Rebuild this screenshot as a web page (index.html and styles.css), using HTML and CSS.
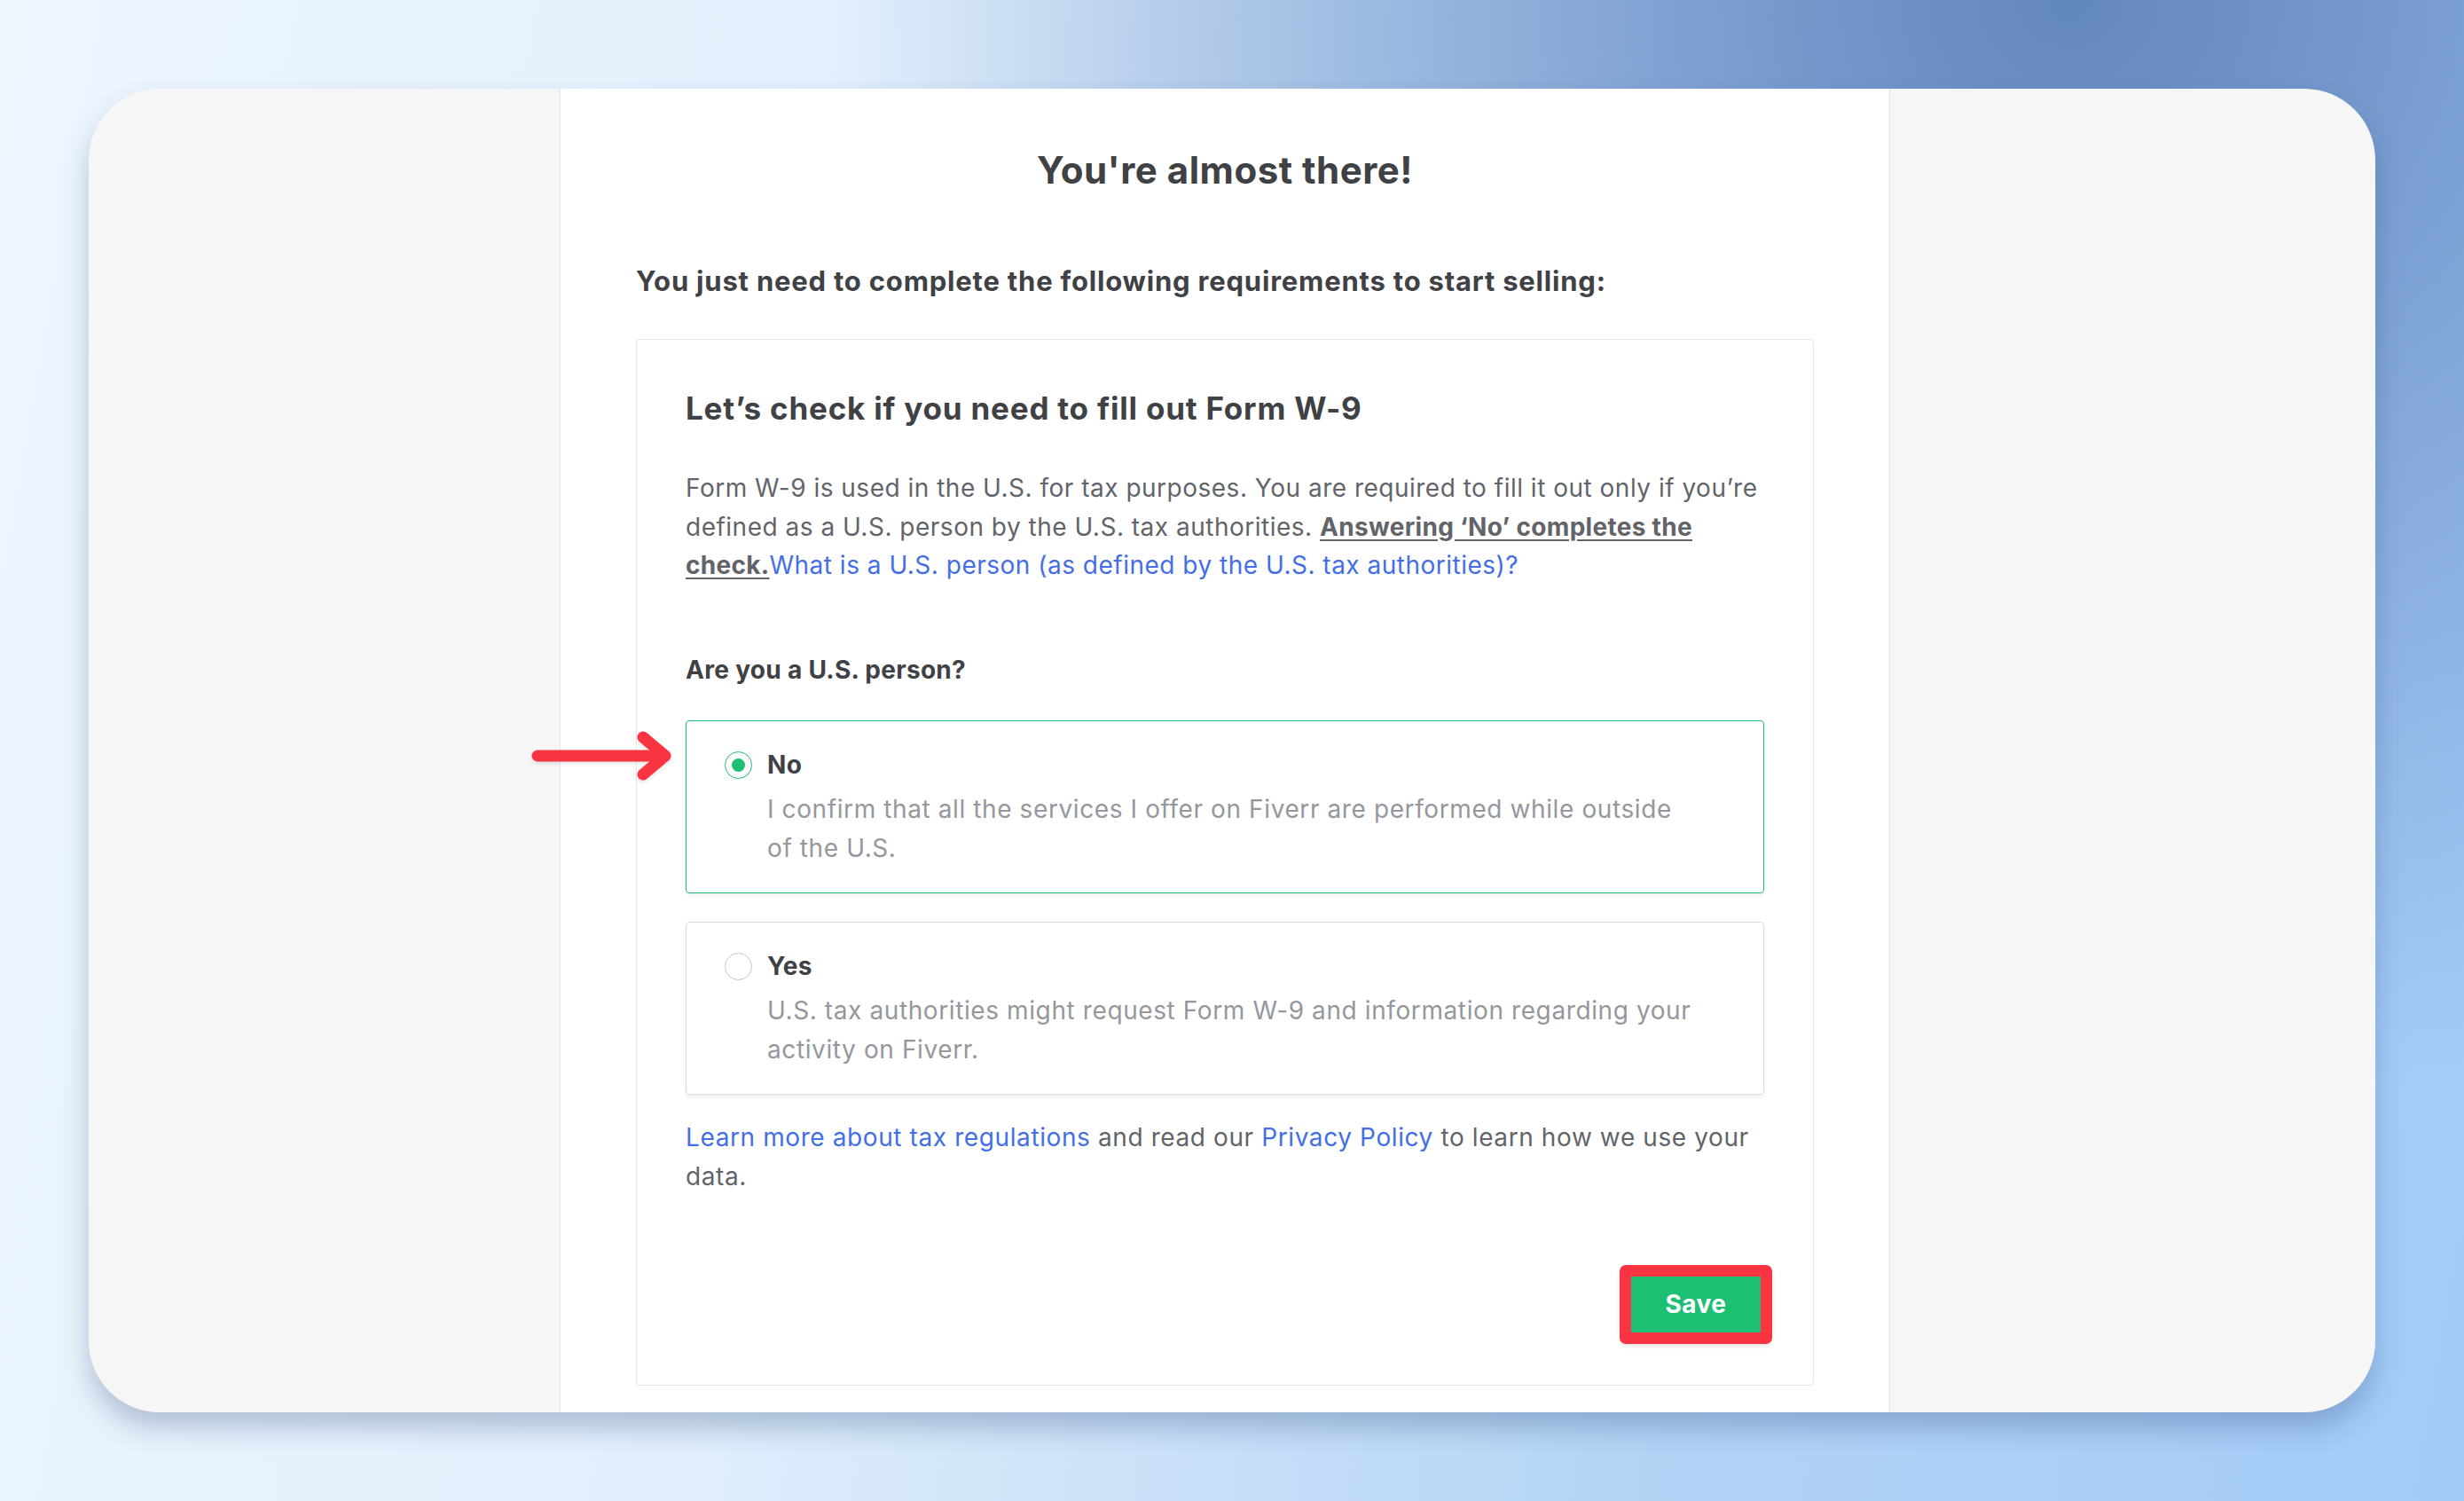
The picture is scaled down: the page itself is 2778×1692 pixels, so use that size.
FILE: index.html
```html
<!DOCTYPE html>
<html lang="en">
<head>
    <meta charset="UTF-8">
    <meta name="viewport" content="width=device-width, initial-scale=1.0">
    <title>Seller requirements - Form W-9</title>
    <link rel="stylesheet" href="styles.css">
</head>
<body>
    <div class="window">
        <!-- pointer to the selected answer -->
        <svg class="pointer" width="170" height="60" viewBox="0 0 170 60">
            <path d="M12 30 H156 M131 9 L156 30 L131 51" fill="none" stroke="#fb3441" stroke-width="13" stroke-linecap="round" stroke-linejoin="round"/>
        </svg>

        <main class="page">
            <h1>You're almost there!</h1>
            <h2 class="lead">You just need to complete the following requirements to start selling:</h2>

            <section class="panel">
                <h3>Let’s check if you need to fill out Form W-9</h3>
                <p class="intro">
                    Form W-9 is used in the U.S. for tax purposes. You are required to fill it out only if you’re
                    defined as a U.S. person by the U.S. tax authorities. <a class="strong-link" href="#">Answering ‘No’ completes the check.</a><a class="link" href="#">What is a U.S. person (as defined by the U.S. tax authorities)?</a>
                </p>

                <div class="question">Are you a U.S. person?</div>

                <label class="option option-selected">
                    <span class="radio radio-on"></span>
                    <span class="option-body">
                        <span class="option-title">No</span>
                        <span class="option-text">I confirm that all the services I offer on Fiverr are performed while outside of the U.S.</span>
                    </span>
                </label>

                <label class="option">
                    <span class="radio"></span>
                    <span class="option-body">
                        <span class="option-title">Yes</span>
                        <span class="option-text">U.S. tax authorities might request Form W-9 and information regarding your activity on Fiverr.</span>
                    </span>
                </label>

                <p class="note">
                    <a class="link" href="#">Learn more about tax regulations</a> and read our <a class="link" href="#">Privacy Policy</a> to learn how we use your data.
                </p>

                <div class="actions">
                    <span class="mark">
                        <button class="btn-save">Save</button>
                    </span>
                </div>
            </section>
        </main>
    </div>
</body>
</html>
```

FILE: styles.css
```css
* {
    box-sizing: border-box;
}

html, body {
    height: 100%;
}

body {
    margin: 0;
    padding: 100px;
    font-family: Inter, "Noto Sans", sans-serif;
    letter-spacing: 0.6px;
    color: #404145;
    background:
        radial-gradient(ellipse 50% 75% at 84% 0%, rgba(98, 134, 190, 1) 0%, rgba(110, 146, 200, 0.75) 35%, rgba(140, 180, 230, 0) 100%),
        linear-gradient(100deg, #eef6fe 0%, #e0eefc 35%, #b3d3f5 70%, #a2cbf8 100%);
}

.window {
    position: relative;
    height: 100%;
    display: flex;
    justify-content: center;
    padding-right: 16px;
    background: #f6f6f6;
    border-radius: 80px;
    overflow: hidden;
    box-shadow: 0 18px 30px rgba(40, 70, 120, 0.28);
}

.pointer {
    position: absolute;
    left: 494px;
    top: 722px;
    z-index: 2;
    filter: drop-shadow(0 2px 2px rgba(0, 0, 0, 0.12));
}

.page {
    width: 1500px;
    background: #fff;
    border-left: 1px solid #e4e5e7;
    border-right: 1px solid #e4e5e7;
    padding: 67px 85px 0;
}

h1 {
    margin: 0;
    text-align: center;
    font-size: 42px;
    line-height: 50px;
    font-weight: 700;
    letter-spacing: 0.5px;
}

.lead {
    margin: 80px 0 45px;
    font-size: 31px;
    line-height: 40px;
    font-weight: 700;
    letter-spacing: 0.8px;
}

.panel {
    border: 1px solid #e4e5e7;
    border-radius: 4px;
    padding: 55px 55px 46px;
}

h3 {
    margin: 0 0 46px;
    font-size: 35px;
    line-height: 45px;
    font-weight: 700;
    letter-spacing: 0.8px;
}

.intro {
    margin: 0 0 74px;
    font-size: 28px;
    line-height: 43.5px;
    letter-spacing: 0.5px;
    color: #62646a;
}

a {
    text-decoration: none;
}

.strong-link {
    color: #62646a;
    font-weight: 700;
    letter-spacing: 0.3px;
    text-decoration: underline;
    text-underline-offset: 4px;
}

.link {
    color: #446ee7;
}

.question {
    margin-bottom: 35px;
    font-size: 28px;
    line-height: 43px;
    font-weight: 700;
    letter-spacing: 0.3px;
}

.option {
    display: flex;
    gap: 17px;
    margin-bottom: 32px;
    padding: 27px 74px 28px 43px;
    border: 1px solid #dadbdd;
    border-radius: 4px;
    box-shadow: 0 3px 4px rgba(0, 0, 0, 0.06);
    cursor: pointer;
}

.option:last-of-type {
    margin-bottom: 26px;
}

.option-selected {
    border-color: #1dbf73;
}

.radio {
    flex: none;
    width: 31px;
    height: 31px;
    margin-top: 7px;
    border: 1px solid #c5c6c9;
    border-radius: 50%;
    display: flex;
    align-items: center;
    justify-content: center;
}

.radio-on {
    border-color: #1dbf73;
}

.radio-on::after {
    content: "";
    width: 15px;
    height: 15px;
    border-radius: 50%;
    background: #1dbf73;
}

.option-body {
    display: flex;
    flex-direction: column;
}

.option-title {
    font-size: 28px;
    line-height: 44px;
    font-weight: 700;
    letter-spacing: 0.3px;
    margin-bottom: 6px;
}

.option-text {
    font-size: 28px;
    line-height: 44px;
    color: #95979d;
}

.note {
    margin: 0 0 78px;
    font-size: 28px;
    line-height: 44px;
    color: #62646a;
}

.actions {
    display: flex;
    justify-content: flex-end;
}

/* red highlight frame around the button */
.mark {
    margin-right: -9px;
    padding: 13px;
    background: #fb3441;
    border-radius: 7px;
    box-shadow: 0 3px 5px rgba(0, 0, 0, 0.1);
    display: flex;
}

.btn-save {
    width: 146px;
    height: 63px;
    border: none;
    background: #1dbf73;
    color: #fff;
    font-family: inherit;
    font-size: 28px;
    font-weight: 700;
    letter-spacing: 0.5px;
    cursor: pointer;
}
```
